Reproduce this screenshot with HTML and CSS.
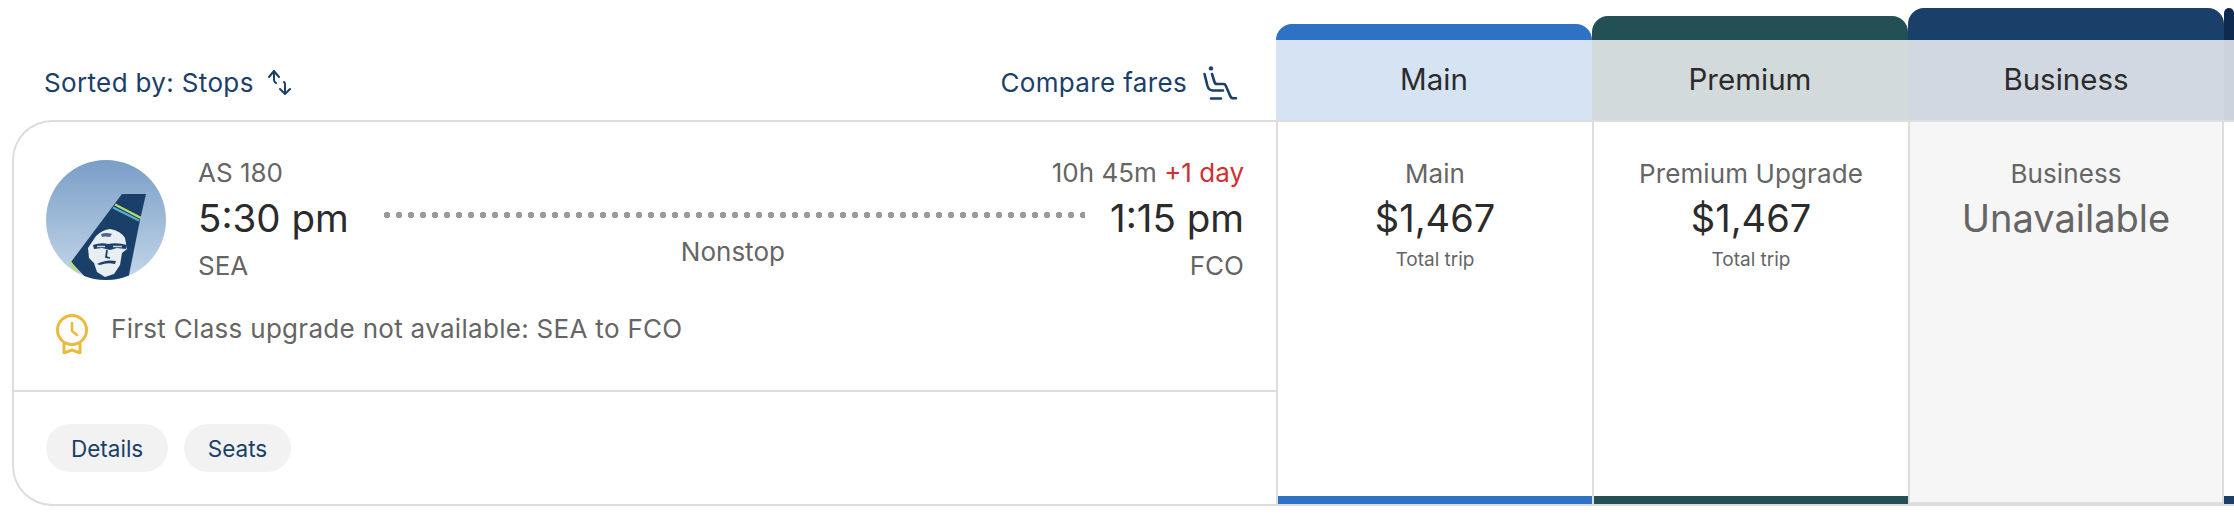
FILE: index.html
```html
<!DOCTYPE html>
<html lang="en">
<head>
<meta charset="utf-8">
<title>Flight results</title>
<link rel="stylesheet" href="styles.css">
</head>
<body>
<main class="page">
  <section class="results">
    <div class="toolbar">
      <a class="tool sort">Sorted by: Stops
        <svg class="sort-icon" viewBox="0 0 26 28" fill="none" stroke="currentColor" stroke-width="2" stroke-linecap="round" stroke-linejoin="round"><path d="M2 8l5-6 5 6M7 2v9q0 2 2 3"/><path d="M13 20l5 5 5-5M18 25V15q0-1-1-2"/></svg>
      </a>
      <a class="tool compare">Compare fares
        <svg class="seat-icon" viewBox="0 0 35 35" fill="none" stroke="currentColor" stroke-width="2.6" stroke-linecap="round" stroke-linejoin="round"><circle cx="8" cy="2.4" r="2.200" fill="currentColor" stroke="none"/><path d="M1.500 8l3 12q1.300 4.500 5.500 4.500h10"/><path d="M9 8l2.500 8q.6 2 2.500 2h6.500q1.500 0 2.200 1.500l4.300 10q1 2.800 3.200 2.800h2.800"/><path d="M8 32.500h10"/></svg>
      </a>
    </div>
    <article class="card">
      <div class="card-main">
        <div class="flight">
          <svg class="logo" viewBox="0 0 120 120">
            <defs>
              <linearGradient id="sky" x1="0" y1="0" x2="0" y2="1"><stop offset="0" stop-color="#7a9ec7"/><stop offset="1" stop-color="#c4d6e9"/></linearGradient>
              <clipPath id="disc"><circle cx="60" cy="60" r="60"/></clipPath>
              <filter id="soft"><feGaussianBlur stdDeviation="0.5"/></filter>
            </defs>
            <g clip-path="url(#disc)">
              <rect width="120" height="120" fill="url(#sky)"/>
              <path d="M76 34h24l-6 26-12 60H42L25 102z" fill="#1a4069"/>
              <path d="M24 102l8 12" stroke="#b7dd79" stroke-width="3"/>
              <path d="M69 44.500l26 13.500" stroke="#b5d66d" stroke-width="2.500"/>
              <path d="M67 47.500l26 13" stroke="#56b0cf" stroke-width="2"/>
              <g filter="url(#soft)">
                <path d="M50 76q6-6 14-7 11 2 15 9l2 11-5 4-2 12-6 9-9 3-8-5-3-9-5-5-1-10 4-6z" fill="#e9eef3"/>
                <path d="M47 85q8-3 15-1 9-2 19 1l-1 4-9-1-7 2-8-2-8 1z" fill="#1a4069"/>
                <path d="M51 86.500h8M67 86.500h9" stroke="#c9d4df" stroke-width="1.500"/>
                <path d="M61 90l-1 7 4 1" stroke="#1a4069" stroke-width="1.800" fill="none"/>
                <path d="M51 104q9-5 19-3l-1 3q-8-2-15 1z" fill="#1a4069"/>
                <path d="M55 74q5-2 11 0l-2 3q-5-1-8 0z" fill="#4a6a8d"/>
              </g>
            </g>
          </svg>
          <div class="leg leg-from">
            <div class="meta">AS 180</div>
            <div class="time">5:30 pm</div>
            <div class="meta code">SEA</div>
          </div>
          <div class="route">
            <div class="dots"></div>
            <div class="meta stops">Nonstop</div>
          </div>
          <div class="leg leg-to">
            <div class="meta duration"><span>10h 45m <span class="plus">+1 day</span></span></div>
            <div class="time">1:15 pm</div>
            <div class="meta code">FCO</div>
          </div>
        </div>
        <div class="notice">
          <svg class="medal" viewBox="0 0 32 40" fill="none" stroke="#ecb83e" stroke-width="3" stroke-linecap="round" stroke-linejoin="round"><circle cx="16" cy="16" r="14.500"/><path d="M16 9v8l5 4" stroke-width="2.600"/><path d="M8 30v9l8-3 8 3v-9"/></svg>
          <span>First Class upgrade not available: SEA to FCO</span>
        </div>
      </div>
      <div class="card-actions">
        <a class="pill">Details</a>
        <a class="pill pill-seats">Seats</a>
      </div>
    </article>
  </section>

  <section class="fares">
    <div class="fare fare-main">
      <div class="fare-strip"></div>
      <div class="fare-head">Main</div>
      <div class="fare-body">
        <div class="fare-name">Main</div>
        <div class="fare-price">$1,467</div>
        <div class="fare-note">Total trip</div>
      </div>
    </div>
    <div class="fare fare-premium">
      <div class="fare-strip"></div>
      <div class="fare-head">Premium</div>
      <div class="fare-body">
        <div class="fare-name">Premium Upgrade</div>
        <div class="fare-price">$1,467</div>
        <div class="fare-note">Total trip</div>
      </div>
    </div>
    <div class="fare fare-business">
      <div class="fare-strip"></div>
      <div class="fare-head">Business</div>
      <div class="fare-body">
        <div class="fare-name">Business</div>
        <div class="fare-price">Unavailable</div>
      </div>
    </div>
    <div class="fare fare-first">
      <div class="fare-strip"></div>
      <div class="fare-head"></div>
      <div class="fare-body"></div>
    </div>
  </section>
</main>
</body>
</html>
```
FILE: styles.css
```css
* { box-sizing: border-box; }
html, body { margin: 0; padding: 0; background: #fff; overflow: hidden; }
body { font-family: "Inter", "Liberation Sans", sans-serif; color: #2b2b2b; }

.page { display: flex; height: 506px; padding-left: 12px; }

.results { width: 1264px; display: flex; flex-direction: column; }
.toolbar { height: 120px; display: flex; justify-content: space-between; align-items: center; padding: 46px 38px 0 32px; }
.tool { display: flex; align-items: center; color: #1a4069; font-size: 26px; line-height: 32px; letter-spacing: .35px; }
.sort-icon { width: 26px; height: 28px; margin-left: 13px; }
.seat-icon { width: 35px; height: 35px; margin-left: 16px; }

.card { flex: 1; display: flex; flex-direction: column; border: 2px solid #ddd; border-right: 0; border-radius: 40px 0 0 40px; }
.card-main { height: 270px; border-bottom: 2px solid #ddd; padding: 38px 32px 0 32px; }
.flight { display: flex; gap: 32px; }
.logo { width: 120px; height: 120px; flex: none; }
.leg { flex: none; margin-top: -1px; }
.leg-to { text-align: right; }
.meta { font-size: 26px; line-height: 28px; color: #656565; }
.duration { display: flex; justify-content: flex-end; width: 0; min-width: 100%; white-space: nowrap; }
.plus { color: #d32f2f; }
.time { font-size: 38.5px; line-height: 60px; margin-top: 1px; color: #2b2b2b; }
.code { margin-top: 4px; }
.route { flex: 1; display: flex; flex-direction: column; align-items: center; padding-top: 52px; margin-right: -7px; }
.dots { width: 100%; height: 6px; background: radial-gradient(circle, #9a9a9a 3px, transparent 3.4px) 0 0 / 12px 6px repeat-x; }
.stops { margin-top: 20px; }

.notice { display: flex; align-items: flex-start; gap: 23px; margin-top: 34px; padding-left: 10px; color: #656565; font-size: 26px; line-height: 30px; letter-spacing: .3px; }
.medal { width: 32px; height: 40px; flex: none; }

.card-actions { display: flex; gap: 16px; padding: 32px 32px 0; }
.pill { height: 48px; display: flex; align-items: center; padding: 0 25px; border-radius: 24px; background: #f2f2f2; color: #1a4069; font-size: 22.5px; }
.pill-seats { padding: 0 23.5px; }

.fares { display: flex; align-items: flex-end; flex: none; }
.fare { width: 316px; display: flex; flex-direction: column; height: 100%; justify-content: flex-start; }
.fare-strip { border-radius: 16px 16px 0 0; flex: none; }
.fare-head { height: 80px; flex: none; display: flex; align-items: center; justify-content: center; padding-bottom: 3px; font-size: 29.5px; color: #2b2b2b; }
.fare-body { flex: 1; display: flex; flex-direction: column; align-items: center; padding-top: 38px; border-left: 2px solid #ddd; border-top: 2px solid #ddd; border-bottom: 2px solid #ddd; }

.fare-main { padding-top: 24px; }
.fare-main .fare-strip { height: 16px; background: #2f72c4; }
.fare-main .fare-head { background: #d5e3f3; }
.fare-main .fare-body { box-shadow: inset 0 -8px 0 #2f72c4; }

.fare-premium { padding-top: 16px; }
.fare-premium .fare-strip { height: 24px; background: #225055; }
.fare-premium .fare-head { background: #d2dadb; }
.fare-premium .fare-body { box-shadow: inset 0 -8px 0 #225055; }

.fare-business { padding-top: 8px; }
.fare-business .fare-strip { height: 32px; background: #1a4069; }
.fare-business .fare-head { background: #d1d8e1; }
.fare-business .fare-body { background: #f6f6f6; border-right: 2px solid #ddd; border-bottom-width: 4px; border-top-color: #dde1e6; }
.fare-business .fare-price { color: #656565; }

.fare-first { width: 10px; padding-top: 8px; }
.fare-first .fare-strip { height: 32px; background: #0f2a4f; }
.fare-first .fare-head { background: #cdd3dc; }
.fare-first .fare-body { border-left: 0; box-shadow: inset 0 -8px 0 #1a4069; }

.fare-name { font-size: 26px; line-height: 28px; letter-spacing: .1px; color: #656565; }
.fare-price { font-size: 38px; line-height: 60px; color: #2b2b2b; }
.fare-note { font-size: 19px; line-height: 24px; color: #656565; }
```
